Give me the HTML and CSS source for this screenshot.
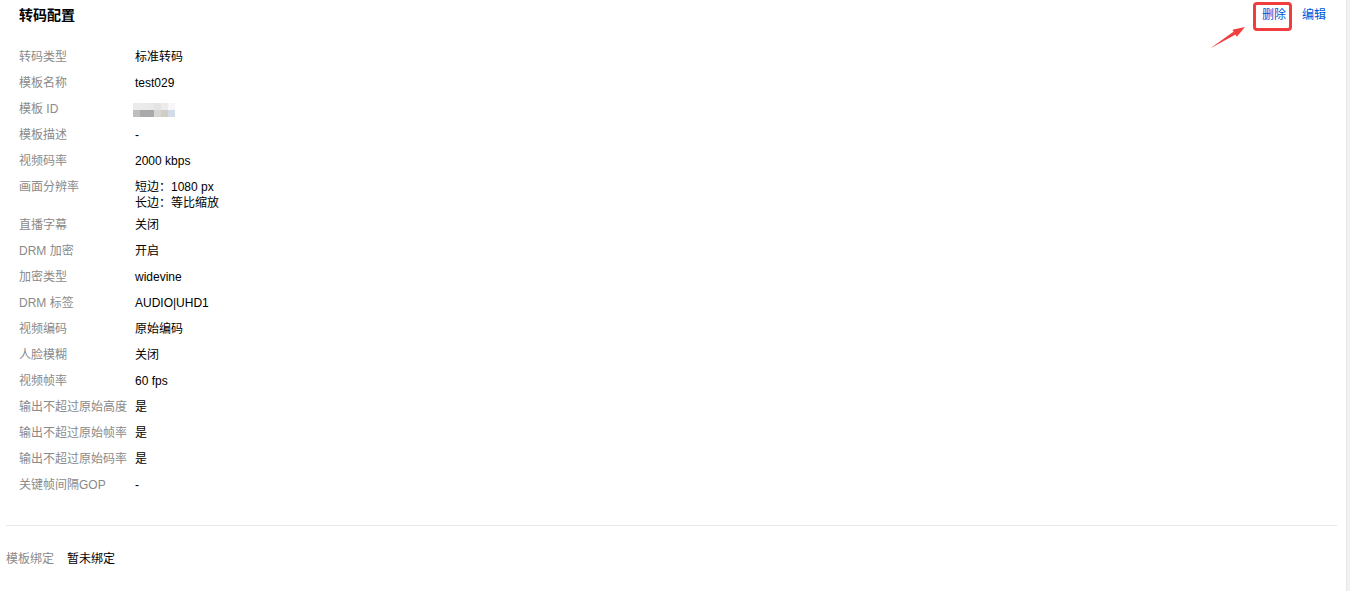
FILE: index.html
```html
<!DOCTYPE html>
<html lang="zh-CN">
<head>
<meta charset="utf-8">
<title>转码配置</title>
<link rel="stylesheet" href="styles.css">
</head>
<body>
<div class="page">
  <main class="main">
    <section class="detail">
      <header class="header">
        <h2 class="title">转码配置</h2>
        <div class="actions">
          <a class="link">删除</a>
          <a class="link">编辑</a>
        </div>
      </header>
      <dl class="fields">
        <div class="row"><dt>转码类型</dt><dd>标准转码</dd></div>
        <div class="row"><dt>模板名称</dt><dd>test029</dd></div>
        <div class="row"><dt>模板 ID</dt><dd><span class="mosaic"><i class="m1"></i><i class="m2"></i><i class="m3"></i><i class="m4"></i><i class="m5"></i><i class="m6"></i><i class="m7"></i><i class="m8"></i><i class="m9"></i><i class="m10"></i><i class="m11"></i><i class="m12"></i></span></dd></div>
        <div class="row"><dt>模板描述</dt><dd>-</dd></div>
        <div class="row"><dt>视频码率</dt><dd>2000 kbps</dd></div>
        <div class="row"><dt>画面分辨率</dt><dd class="multi"><div>短边：1080 px</div><div>长边：等比缩放</div></dd></div>
        <div class="row"><dt>直播字幕</dt><dd>关闭</dd></div>
        <div class="row"><dt>DRM 加密</dt><dd>开启</dd></div>
        <div class="row"><dt>加密类型</dt><dd>widevine</dd></div>
        <div class="row"><dt>DRM 标签</dt><dd>AUDIO|UHD1</dd></div>
        <div class="row"><dt>视频编码</dt><dd>原始编码</dd></div>
        <div class="row"><dt>人脸模糊</dt><dd>关闭</dd></div>
        <div class="row"><dt>视频帧率</dt><dd>60 fps</dd></div>
        <div class="row"><dt>输出不超过原始高度</dt><dd>是</dd></div>
        <div class="row"><dt>输出不超过原始帧率</dt><dd>是</dd></div>
        <div class="row"><dt>输出不超过原始码率</dt><dd>是</dd></div>
        <div class="row"><dt>关键帧间隔GOP</dt><dd>-</dd></div>
      </dl>
    </section>
    <hr class="divider">
    <dl class="binding">
      <dt>模板绑定</dt><dd>暂未绑定</dd>
    </dl>

    <div class="mark-box"></div>
    <svg class="mark-arrow" width="50" height="35" viewBox="0 0 50 35">
      <polygon points="10,28.5 35.6,14.6 33.8,11.6" fill="#f03d3d"/>
      <polygon points="45,7 36.8,16.8 32.4,9.8" fill="#f03d3d"/>
    </svg>
  </main>
  <div class="scroll-track"></div>
</div>
</body>
</html>
```

FILE: styles.css
```css
* { box-sizing: border-box; }

html, body {
  margin: 0;
  padding: 0;
  background: #fff;
}

body {
  font-family: "Liberation Sans", "Noto Sans CJK SC", Arial, sans-serif;
  font-size: 12px;
  color: #000;
}

.page {
  display: flex;
  width: 1350px;
  height: 591px;
  overflow: hidden;
}

.main {
  position: relative;
  flex: 1;
  padding: 0 9px 0 6px;
}

.scroll-track {
  width: 4px;
  background: #f1f1f4;
  border-left: 1px solid #e6e6eb;
}

.detail {
  padding-left: 13px;
}

.header {
  display: flex;
  align-items: center;
  justify-content: space-between;
  height: 30px;
  padding-right: 11px;
}

.title {
  margin: 0;
  font-size: 14px;
  font-weight: bold;
  line-height: 20px;
  color: #000;
}

.actions {
  display: flex;
  gap: 16px;
  line-height: 20px;
}

.link {
  color: #0052d9;
  cursor: pointer;
}

.fields {
  margin: 17px 0 0;
  display: flex;
  flex-direction: column;
  gap: 6px;
}

.row {
  display: flex;
  line-height: 20px;
}

.row dt {
  width: 116px;
  flex: none;
  color: #8a8a8a;
}

.row dd {
  margin: 0;
  color: #000;
}

.row dd.multi {
  line-height: 16px;
  padding-top: 2px;
  margin-bottom: -2px;
}

.mosaic {
  display: inline-grid;
  grid-template-columns: repeat(6, 7px);
  grid-template-rows: 7px 7px;
  vertical-align: middle;
  margin-left: -2px;
}

.mosaic i { display: block; }
.m1 { background: #ebebeb; }
.m2 { background: #ebebeb; }
.m3 { background: #e9e9e9; }
.m4 { background: #e4e4e4; }
.m5 { background: #ececec; }
.m6 { background: #f7f7f9; }
.m7 { background: #bfbdbd; }
.m8 { background: #a9a9a9; }
.m9 { background: #a8a9a9; }
.m10 { background: #d8d6d2; }
.m11 { background: #d2ccc6; }
.m12 { background: #d2dce8; }

.divider {
  margin: 30px 0 0;
  border: 0;
  height: 1px;
  background: #e7e7ed;
}

.binding {
  display: flex;
  margin: 23px 0 0;
  line-height: 20px;
}

.binding dt {
  width: 61px;
  color: #8a8a8a;
}

.binding dd {
  margin: 0;
  color: #000;
}

.mark-box {
  position: absolute;
  left: 1253px;
  top: 2px;
  width: 39px;
  height: 29px;
  border: 3px solid #f03d3d;
  border-radius: 4px;
}

.mark-arrow {
  position: absolute;
  left: 1200px;
  top: 20px;
}
```
